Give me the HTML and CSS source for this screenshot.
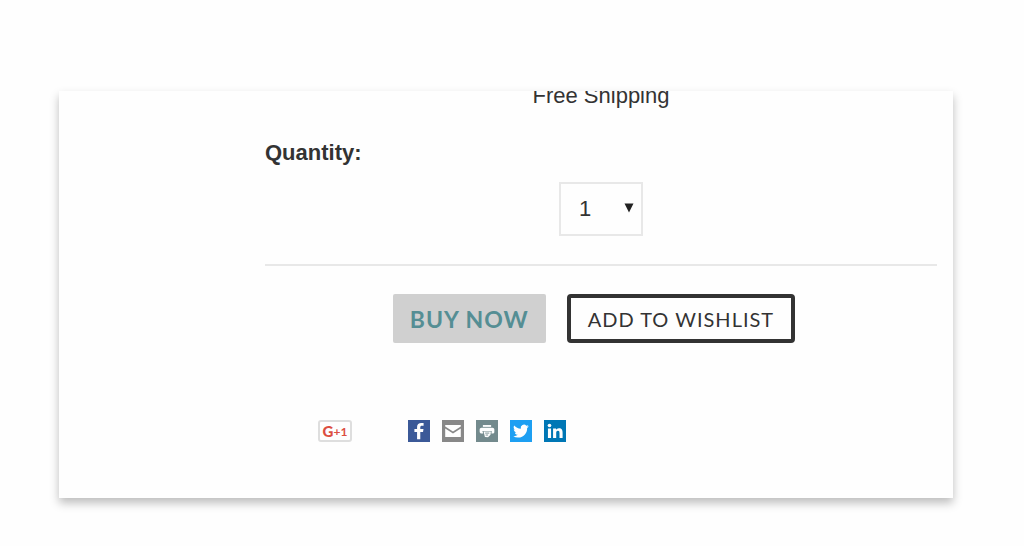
FILE: index.html
```html
<!DOCTYPE html>
<html lang="en">

<head>
  <meta charset="UTF-8">
  <meta name="viewport" content="width=device-width, initial-scale=1.0">
  <title>Product</title>
  <link rel="stylesheet" href="styles.css">
</head>

<body>
  <main class="card">
    <p class="shipping">Free Shipping</p>

    <!-- Quantity -->
    <label class="quantity-label" for="quantity">Quantity:</label>
    <div class="quantity-box">
      <select id="quantity" class="quantity">
        <option>1</option>
        <option>2</option>
        <option>3</option>
        <option>4</option>
      </select>
      <svg class="arrow" viewBox="0 0 10 10" aria-hidden="true"><path d="M0.5 0.5h9L5 9.5z" fill="#222"/></svg>
    </div>

    <!-- Buttons -->
    <div class="actions">
      <button type="button" class="btn buy">BUY NOW</button>
      <button type="button" class="btn wishlist">ADD TO WISHLIST</button>
    </div>

    <!-- Share links -->
    <div class="share">
      <button type="button" class="gplus"><span class="g">G</span><span>+1</span></button>
      <div class="icons">
        <a href="#" class="icon facebook" aria-label="Facebook">
          <svg viewBox="0 0 24 24"><path d="M13.400 21v-8h3l.5-3.300h-3.500V8c0-1 .5-1.700 1.800-1.700h1.800V3.400c-.5-.1-1.400-.2-2.500-.2-2.800 0-4.600 1.600-4.600 4.400v2.100H7v3.300h2.900v8z"/></svg>
        </a>
        <a href="#" class="icon email" aria-label="Email">
          <svg viewBox="0 0 24 24"><path d="M3.500 5.500h17v1.700L12 12.600 3.500 7.200z"/><path d="M3.500 9.400l8.500 5.400 8.500-5.400v9.100h-17z"/></svg>
        </a>
        <a href="#" class="icon print" aria-label="Print">
          <svg viewBox="0 0 24 24"><path d="M7.500 5.500h9v2h-9z"/><path d="M6 8.400h12c1.100 0 2 .9 2 2v2.600c0 1-.7 1.700-1.700 1.700h-1.500l.3-2.700H7l.9 2.700H6.200C5 14.700 4 13.900 4 12.700v-2.300c0-1.100.9-2 2-2z"/><path d="M8.200 12.500h8l-.4 3.700-2.600 2.700-3.400-.3z"/><path class="lines" d="M10 14.300h4.500M10.500 16.400h2.700"/></svg>
        </a>
        <a href="#" class="icon twitter" aria-label="Twitter">
          <svg viewBox="0 0 24 24"><path d="M20.500 6.800c-.6.300-1.300.5-2 .6.700-.4 1.300-1.100 1.500-1.900-.7.400-1.400.7-2.200.8a3.500 3.500 0 0 0-6 3.200c-2.900-.1-5.500-1.500-7.200-3.600a3.500 3.500 0 0 0 1.100 4.700c-.6 0-1.100-.2-1.600-.4 0 1.700 1.200 3.100 2.800 3.500-.5.100-1 .2-1.600.1.400 1.400 1.700 2.400 3.300 2.400A7 7 0 0 1 3.500 17.700 9.900 9.900 0 0 0 8.800 19.200c6.500 0 10.200-5.500 9.900-10.500.7-.5 1.300-1.200 1.800-1.900z"/></svg>
        </a>
        <a href="#" class="icon linkedin" aria-label="LinkedIn">
          <svg viewBox="0 0 24 24"><circle cx="6" cy="6" r="2"/><path d="M4.300 9.200h3.400v10.300H4.300zM9.900 9.200h3.200v1.400c.5-.9 1.600-1.700 3.200-1.700 3.300 0 4 2.100 4 4.900v5.700h-3.400v-5c0-1.200 0-2.800-1.700-2.800s-1.900 1.300-1.900 2.700v5.100H9.900z"/></svg>
        </a>
      </div>
    </div>
  </main>
</body>

</html>
```
FILE: styles.css
```css
body {
  margin: 0;
  background: #fefefe;
  color: #333;
  font-family: "Liberation Sans", Arial, sans-serif;
  font-size: 22px;
  line-height: 24px;
}

.card {
  display: flex;
  flex-direction: column;
  margin: 91px 71px 40px 59px;
  padding: 0 16px 56px 206px;
  background: #fefefe;
  box-shadow: 0 5px 9px rgba(0, 0, 0, 0.26);
  overflow: hidden;
}

.shipping {
  margin: -7px 0 33px;
  text-align: center;
}

.quantity-label {
  font-weight: bold;
}

.quantity-box {
  position: relative;
  align-self: center;
  margin: 17px 0 28px;
}

.quantity {
  display: block;
  appearance: none;
  box-sizing: border-box;
  width: 84px;
  height: 54px;
  padding: 0 18px 2px;
  border: 2px solid #e8e8e8;
  border-radius: 0;
  background: #fefefe;
  color: #333;
  font: 22px "Liberation Sans", Arial, sans-serif;
}

.arrow {
  position: absolute;
  top: 21px;
  right: 9px;
  width: 10px;
  height: 10px;
  pointer-events: none;
}

.actions {
  display: flex;
  justify-content: center;
  gap: 21px;
  padding: 28px 14px 0 0;
  border-top: 2px solid #e8e8e8;
}

.btn {
  box-sizing: border-box;
  height: 49px;
  padding: 0 17px;
  border-radius: 4px;
  font-family: Lato, sans-serif;
  letter-spacing: 1px;
  white-space: nowrap;
  cursor: pointer;
}

.buy {
  border: none;
  border-radius: 2px;
  background: #d0d0d0;
  color: #558e94;
  font-size: 23px;
  font-weight: bold;
}

.wishlist {
  border: 4px solid #333;
  background: #fefefe;
  color: #333;
  font-size: 20px;
}

.share {
  display: flex;
  align-items: center;
  gap: 56px;
  margin-top: 77px;
  padding-left: 53px;
}

.gplus {
  display: flex;
  align-items: center;
  justify-content: center;
  box-sizing: border-box;
  width: 34px;
  height: 22px;
  padding: 0;
  border: 2px solid #dedede;
  border-radius: 3px;
  background: #fefefe;
  color: #dc4e41;
  font: bold 12px Lato, sans-serif;
  cursor: pointer;
}

.g {
  font-size: 15px;
  font-weight: 900;
}

.icons {
  display: flex;
  gap: 12px;
}

.icon {
  width: 22px;
  height: 22px;
}

.icon svg {
  display: block;
  fill: #fefefe;
}

.facebook {
  background: #3b5998;
}

.email {
  background: #888;
}

.print {
  background: #738a8d;
}

.print .lines {
  fill: none;
  stroke: #738a8d;
}

.twitter {
  background: #1d9ff2;
}

.linkedin {
  background: #0077b5;
}
```
